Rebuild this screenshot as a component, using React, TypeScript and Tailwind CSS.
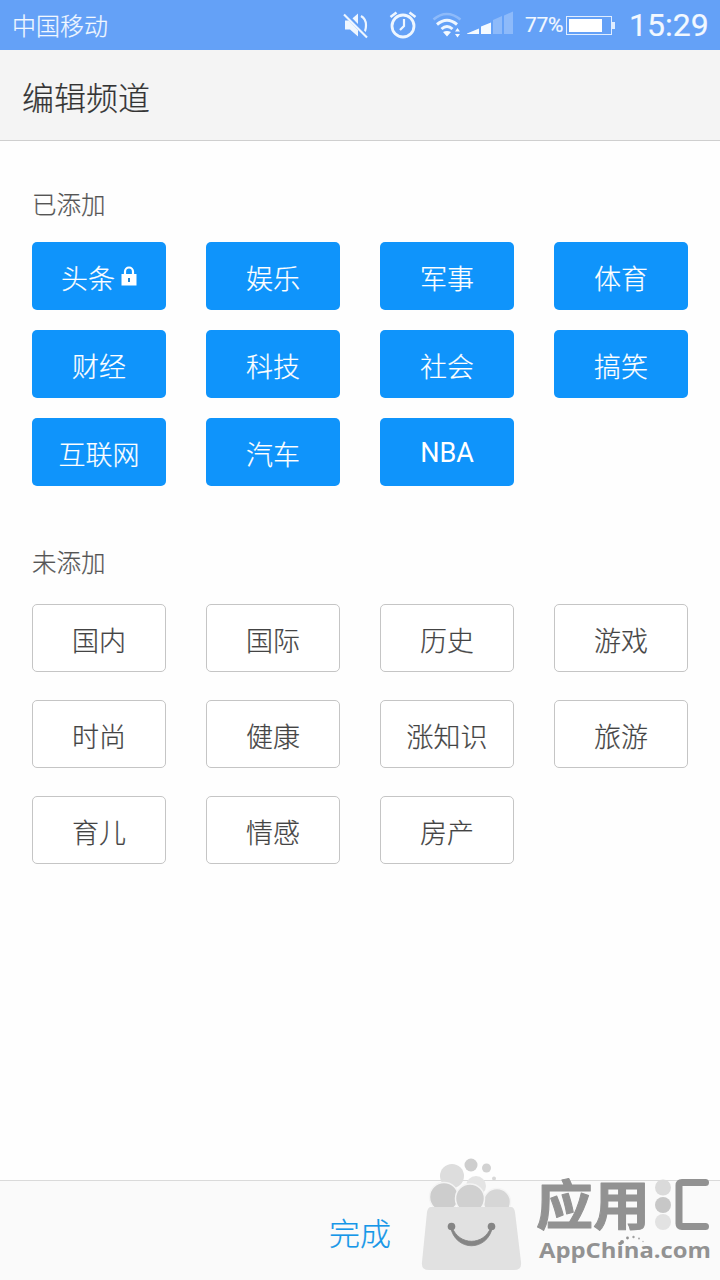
import React from "react";

const added = ["头条", "娱乐", "军事", "体育", "财经", "科技", "社会", "搞笑", "互联网", "汽车", "NBA"];
const available = ["国内", "国际", "历史", "游戏", "时尚", "健康", "涨知识", "旅游", "育儿", "情感", "房产"];

function StatusBar() {
  return (
    <div className="flex h-[50px] shrink-0 items-center bg-[#64a1f7] pr-3 pl-3 text-[#f2f8ff]">
      <span className="text-[24px] leading-[52px] font-light">中国移动</span>
      <svg className="ml-auto h-[50px] w-[186px] shrink-0" viewBox="330 0 186 50" fill="none">
        <g stroke="#eef6ff" fill="none">
          <path d="M345 20.500h5l8-7v23l-8-7h-5z" fill="#eef6ff" stroke="none" />
          <path d="M361 16q5 3 5 9t-3 9" strokeWidth="2.200" />
          <path d="M345 13.500l23 24" stroke="#64a1f7" strokeWidth="4" />
          <path d="M344 14.500l23 23" strokeWidth="2.200" />
          <circle cx="403" cy="26" r="11" strokeWidth="2.800" />
          <path d="M404 19v7l-4 4" strokeWidth="2.200" />
          <path d="M390.500 17l6-4.500M415.500 17l-6-4.500" strokeWidth="2.600" />
          <path d="M433.500 19.500q13-11 27 0" stroke="#8dbafa" strokeWidth="2.600" />
          <path d="M437 24.500q10-8.500 20 0M441.500 29q5.500-5 11 0" strokeWidth="3" />
        </g>
        <path d="M443 32q4-2 8 0l-4 4.500zM455 31.500l2.500-3.500 2.500 3.500zM455 34h5l-2.500 3.500zM467 33.500l12-5v5.500h-12zM481 26.500l10-4V34h-10z" fill="#f5faff" />
        <path d="M493 20l9-4v18h-9zM504 15.500l9-4v22.500h-9z" fill="#8dbafa" />
      </svg>
      <span className="ml-[9px] w-[41px] font-['Roboto',sans-serif] text-[21px] leading-[54px] tracking-[-0.300px] whitespace-nowrap">77%</span>
      <div className="flex h-[19px] w-[46px] shrink-0 border border-[#e0edff] p-[2px]">
        <div className="h-full w-[33px] bg-white" />
      </div>
      <div className="h-[7px] w-[3px] shrink-0 bg-[#e0edff]" />
      <span className="ml-[14px] w-[79px] font-['Roboto',sans-serif] text-[32px] leading-[51px] whitespace-nowrap">15:29</span>
    </div>
  );
}

function Lock() {
  return (
    <svg className="ml-[6px] h-[20px] w-[16px]" viewBox="0 0 16 20" fill="none">
      <path d="M4 9V5.500a4 4 0 0 1 8 0V9" stroke="#fff" strokeWidth="2.200" />
      <path d="M.5 8h15v11.500H.5z" fill="#fff" />
      <path d="M7 12h2v4H7z" fill="#2686d2" />
    </svg>
  );
}

function Watermark() {
  return (
    <div className="absolute right-0 bottom-0 h-[128px] w-[304px]">
      <svg className="absolute inset-0 h-full w-full" viewBox="416 1152 304 128" fill="none">
        <circle cx="452" cy="1176" r="12" fill="#dddddd" />
        <circle cx="476" cy="1186" r="10" fill="#e4e4e4" />
        <circle cx="471" cy="1165" r="6.500" fill="#cecece" />
        <circle cx="486.500" cy="1168" r="4.500" fill="#d2d2d2" />
        <circle cx="494" cy="1178.500" r="2" fill="#d8d8d8" />
        <circle cx="444" cy="1197" r="14.500" fill="#cdcdcd" stroke="#f4f4f4" strokeWidth="1.500" />
        <circle cx="497" cy="1202" r="13.500" fill="#d6d6d6" stroke="#f4f4f4" strokeWidth="1.500" />
        <circle cx="470" cy="1198.500" r="14.500" fill="#d0d0d0" stroke="#f4f4f4" strokeWidth="1.500" />
        <path d="M431 1207h80q3 0 4 5l6 50q1 8-7 8h-85q-8 0-7-8l5-50q1-5 4-5z" fill="#e1e1e1" />
        <circle cx="451.500" cy="1226.500" r="3.800" fill="#858585" />
        <circle cx="491.500" cy="1226.500" r="3.800" fill="#858585" />
        <path d="M450.500 1227c5 25 37 25 42 0h-1.500c-7 19-32 19-39 0z" fill="#858585" stroke="#858585" strokeWidth="0.800" />
        <circle cx="663" cy="1187.500" r="8" fill="#dadada" />
        <circle cx="663" cy="1205" r="8" fill="#c7c7c7" />
        <circle cx="663" cy="1222" r="8" fill="#e2e2e2" />
        <path d="M705.500 1182.500H682q-3 0-3 3v38q0 3 3 3h23.500" stroke="#929292" strokeWidth="7" strokeLinecap="round" />
        <circle cx="622" cy="1242" r="2" fill="#929292" />
        <circle cx="627.500" cy="1238" r="1.400" fill="#929292" />
        <circle cx="633.500" cy="1237" r="1.200" fill="#a0a0a0" />
        <circle cx="639" cy="1238.500" r="1" fill="#a8a8a8" />
        <circle cx="643" cy="1241.500" r=".8" fill="#b8b8b8" />
        <text x="536" y="1225" fill="#929292" stroke="#929292" strokeWidth="1" strokeLinejoin="round" fontFamily="'Noto Sans CJK SC', sans-serif" fontWeight="700" fontSize="53" textLength="114" lengthAdjust="spacingAndGlyphs">应用</text>
        <text x="539" y="1257.500" fill="#929292" fontFamily="'Open Sans', sans-serif" fontWeight="700" fontSize="21.500" textLength="172" lengthAdjust="spacingAndGlyphs">AppChina.com</text>
      </svg>
    </div>
  );
}

export default function App() {
  return (
    <div className="relative flex h-[1280px] w-[720px] flex-col overflow-hidden bg-[#fefefe] font-['Noto_Sans_CJK_SC',sans-serif] [-webkit-text-stroke:0.200px_currentColor]">
      <StatusBar />
      <header className="h-[91px] shrink-0 border-b border-[#cfcfcf] bg-[#f4f4f4] pl-[22px] text-[32px] leading-[92px] font-light text-[#333]">
        编辑频道
      </header>
      <main className="flex-1 px-8 pt-[43px]">
        <h2 className="h-[40px] text-[24.500px] leading-[39px] font-light text-[#555]">已添加</h2>
        <div className="mt-[18px] grid grid-cols-4 gap-x-10 gap-y-5">
          {added.map((name, i) => (
            <button key={name} className="flex h-[68px] items-center justify-center rounded-[5px] bg-[#0f94fb] font-['Roboto','Noto_Sans_CJK_SC',sans-serif] text-[27px] leading-none font-light text-white">
              <span className={name === "NBA" ? "pt-[2px] font-normal [-webkit-text-stroke:0]" : "pt-[8px]"}>{name}</span>
              {i === 0 && <Lock />}
            </button>
          ))}
        </div>
        <h2 className="mt-[56px] h-[40px] text-[24.500px] leading-[39px] font-light text-[#555]">未添加</h2>
        <div className="mt-[22px] grid grid-cols-4 gap-x-10 gap-y-7">
          {available.map((name) => (
            <button key={name} className="flex h-[68px] items-center justify-center rounded-[5px] border border-[#c5c5c5] bg-white pt-[3px] text-[27px] leading-none font-light text-[#444]">
              {name}
            </button>
          ))}
        </div>
      </main>
      <footer className="flex h-[100px] shrink-0 justify-center border-t border-[#dadada] bg-[#fafafa] text-[31px] leading-[102px] font-light text-[#1697e8]">
        完成
      </footer>
      <Watermark />
    </div>
  );
}
